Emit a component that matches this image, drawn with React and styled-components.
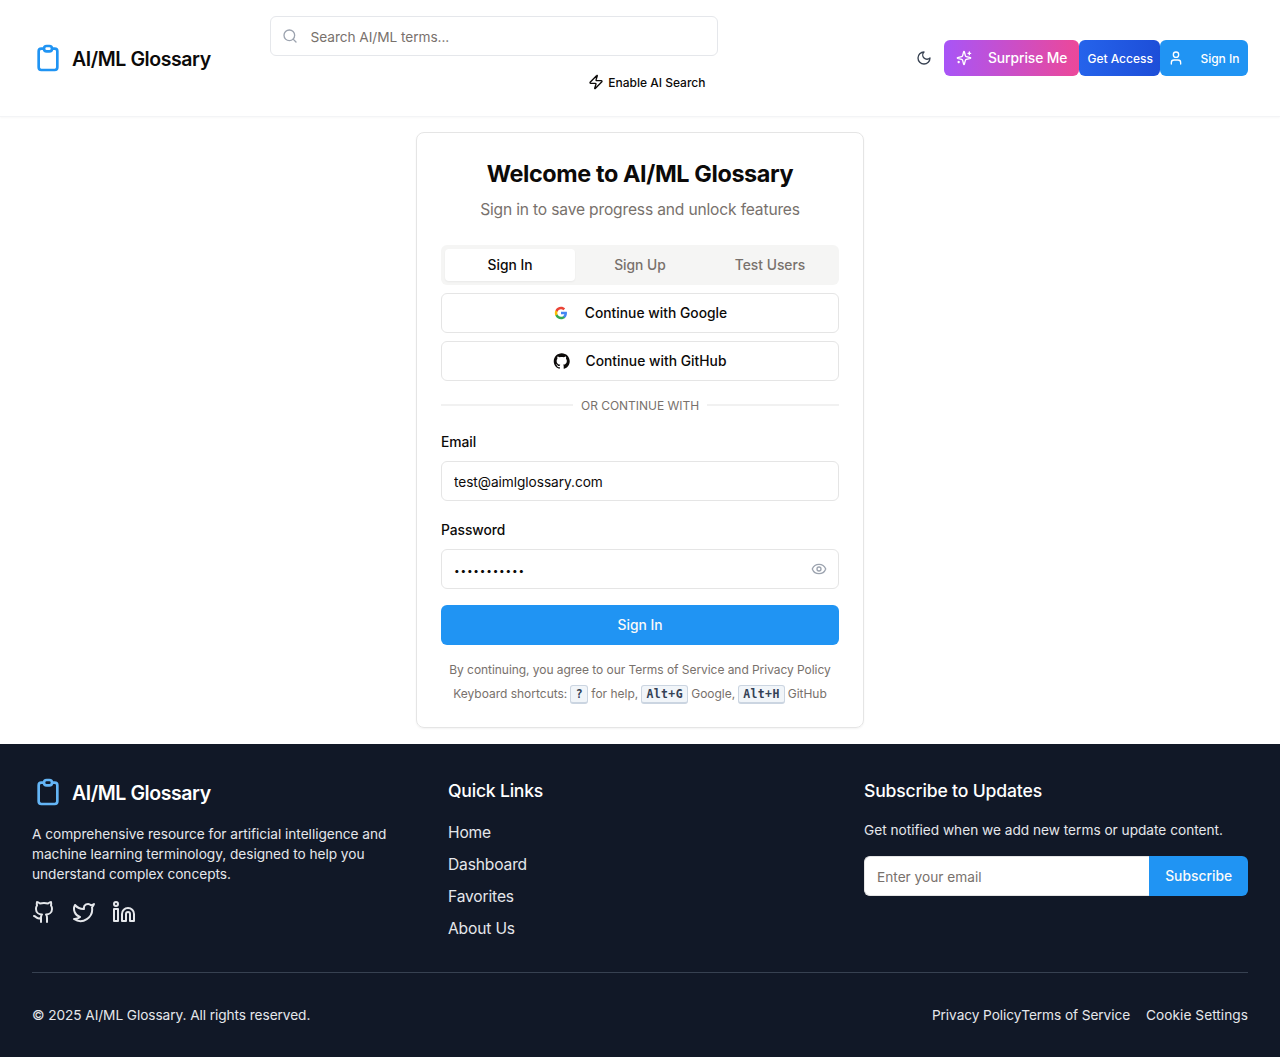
import React from "react";
import styled, { createGlobalStyle, css } from "styled-components";
import { Search, Zap, Eye, User, Github, Twitter, Linkedin } from "lucide-react";

const GlobalStyle = createGlobalStyle`
  *, *::before, *::after { box-sizing: border-box; }
  body {
    margin: 0;
    background: #fff;
    color: #0c0a09;
    font-family: Inter, "Liberation Sans", sans-serif;
    font-size: 16px;
    line-height: 24px;
    -webkit-font-smoothing: antialiased;
  }
  h1, h2, h3, p, ul { margin: 0; padding: 0; }
  ul { list-style: none; }
  a { color: inherit; text-decoration: none; }
  button, input { font: inherit; color: inherit; letter-spacing: inherit; }
`;

const Page = styled.div`
  display: flex;
  flex-direction: column;
  min-height: 1057px;
`;

/* Header */
const Header = styled.header`
  display: flex;
  align-items: center;
  height: 117px;
  padding: 16px 32px;
  border-bottom: 1px solid #f3f4f6;
  box-shadow: 0 1px 2px rgba(0, 0, 0, 0.03);
`;

const Brand = styled.a`
  display: flex;
  align-items: center;
  gap: 8px;
  color: ${(p) => p.$color || "inherit"};
  font-size: 19.5px;
  line-height: 28px;
  font-weight: 600;
  letter-spacing: -0.42px;
`;

const BrandName = styled.span`
  padding-top: 2px;
`;

const HeaderBrand = styled(Brand)`
  width: 237.5px;
`;

const SearchArea = styled.div`
  display: flex;
  flex-direction: column;
  align-items: flex-end;
  gap: 8px;
  width: 448px;
`;

const fieldBox = css`
  height: 40px;
  border: 1px solid #e5e5e5;
  border-radius: 6px;
  background: #fff;
  font-size: 13.7px;
  line-height: 20px;
  letter-spacing: -0.06px;
  outline: none;
  &::placeholder { color: #78716c; opacity: 1; }
`;

const SearchBox = styled.label`
  display: flex;
  align-items: center;
  gap: 13px;
  width: 100%;
  padding: 0 11px;
  ${fieldBox}
  border-color: #e5e7eb;
  svg { color: #9ca3af; flex: none; }
`;

const BareInput = styled.input`
  flex: 1;
  min-width: 0;
  border: 0;
  padding: 2px 0 0;
  background: transparent;
  outline: none;
  &::placeholder { color: #78716c; opacity: 1; }
  &[type="password"] { font-size: 10px; letter-spacing: 0.82px; }
`;

const AiToggle = styled.button`
  display: flex;
  align-items: center;
  gap: 4px;
  height: 36px;
  padding: 0 12px;
  border: 0;
  background: none;
  font-size: 12px;
  font-weight: 500;
  letter-spacing: 0;
`;

const ButtonText = styled.span`
  padding-top: 2px;
`;

const Actions = styled.div`
  display: flex;
  align-items: center;
  margin-left: auto;
`;

const IconButton = styled.button`
  display: flex;
  align-items: center;
  justify-content: center;
  width: 40px;
  height: 36px;
  padding: 0;
  border: 0;
  background: none;
  color: #374151;
`;

const HeaderButton = styled.button`
  display: flex;
  align-items: center;
  gap: 16px;
  width: ${(p) => p.$width};
  height: 36px;
  padding: 0 ${(p) => p.$pad};
  border: 0;
  border-radius: 6px;
  background: ${(p) => p.$bg};
  color: #fff;
  font-size: ${(p) => p.$size || "12px"};
  font-weight: 500;
  letter-spacing: ${(p) => p.$track || "0"};
  white-space: nowrap;
  svg { flex: none; }
`;

/* Sign-in card */
const Main = styled.main`
  display: flex;
  justify-content: center;
  padding: 15px 0 16px;
`;

const Card = styled.section`
  display: flex;
  flex-direction: column;
  width: 448px;
  height: 596px;
  padding: 24px;
  border: 1px solid #e5e5e5;
  border-radius: 8px;
  box-shadow: 0 1px 2px rgba(0, 0, 0, 0.05);
`;

const Title = styled.h1`
  padding-top: 1px;
  font-size: 23.4px;
  line-height: 32px;
  font-weight: 700;
  text-align: center;
  letter-spacing: -0.39px;
`;

const Subtitle = styled.p`
  margin-top: 8px;
  color: #78716c;
  font-size: 15.6px;
  text-align: center;
  letter-spacing: -0.17px;
`;

const Tabs = styled.div`
  display: grid;
  grid-template-columns: repeat(3, 1fr);
  height: 40px;
  margin-top: 23px;
  padding: 4px;
  border-radius: 6px;
  background: #f5f5f4;
`;

const Tab = styled.button`
  border: 0;
  border-radius: 4px;
  padding: 0;
  background: ${(p) => (p.$active ? "#fff" : "transparent")};
  box-shadow: ${(p) => (p.$active ? "0 1px 2px rgba(0, 0, 0, 0.05)" : "none")};
  color: ${(p) => (p.$active ? "#0c0a09" : "#78716c")};
  font-size: 13.8px;
  line-height: 20px;
  font-weight: 500;
  letter-spacing: 0.01px;
`;

const ProviderButton = styled.button`
  display: flex;
  align-items: center;
  justify-content: center;
  gap: 16px;
  height: 40px;
  margin-top: 8px;
  border: 1px solid #e5e5e5;
  border-radius: 6px;
  background: #fff;
  font-size: 13.8px;
  line-height: 20px;
  font-weight: 500;
  letter-spacing: 0.02px;
`;

const Divider = styled.div`
  display: flex;
  align-items: center;
  gap: 8px;
  height: 16px;
  margin-top: 16px;
  color: #78716c;
  font-size: 12px;
  line-height: 16px;
  letter-spacing: -0.03px;
  white-space: nowrap;
  &::before, &::after {
    content: "";
    flex: 1;
    height: 2px;
    background: #f1f1f1;
  }
`;

const DividerText = styled.span`
  padding-top: 2px;
`;

const Label = styled.label`
  margin-top: 19px;
  font-size: 13.8px;
  line-height: 20px;
  font-weight: 500;
  letter-spacing: -0.05px;
`;

const Field = styled.div`
  display: flex;
  align-items: center;
  margin-top: 9px;
  padding: 0 11px 0 12px;
  ${fieldBox}
  svg { color: #9ca3af; flex: none; }
`;

const Submit = styled.button`
  height: 40px;
  margin-top: 16px;
  border: 0;
  border-radius: 6px;
  background: #2094f3;
  color: #fafaf9;
  font-size: 13.8px;
  line-height: 20px;
  font-weight: 500;
  letter-spacing: 0.01px;
`;

const Note = styled.p`
  display: flex;
  align-items: center;
  justify-content: center;
  height: 16px;
  margin-top: ${(p) => p.$top};
  color: #78716c;
  font-size: 12px;
  line-height: 16px;
  letter-spacing: ${(p) => p.$track};
  white-space: pre;
`;

const Kbd = styled.kbd`
  display: flex;
  justify-content: center;
  width: ${(p) => p.$width};
  height: 19px;
  margin: 0 3px;
  border: 1px solid #cbd5e1;
  border-bottom-width: 2px;
  border-radius: 3px;
  background: #f1f5f9;
  color: #334155;
  font-family: "DejaVu Sans Mono", monospace;
  font-size: 11.5px;
  line-height: 17px;
  font-weight: 700;
  letter-spacing: 0.4px;
`;

/* Footer */
const Footer = styled.footer`
  flex: 1;
  padding: 32px;
  background: #111827;
  color: #e5e7eb;
`;

const FooterGrid = styled.div`
  display: grid;
  grid-template-columns: repeat(3, 384px);
  gap: 32px;
  height: 164px;
`;

const Blurb = styled.p`
  margin-top: 16px;
  font-size: 13.7px;
  line-height: 20px;
  letter-spacing: ${(p) => p.$track};
`;

const Social = styled.div`
  display: flex;
  gap: 16px;
  margin-top: 16px;
`;

const FooterHeading = styled.h3`
  height: 28px;
  padding-top: 1px;
  color: #fff;
  font-size: 17.6px;
  line-height: 28px;
  font-weight: 500;
  letter-spacing: ${(p) => p.$track};
`;

const LinkList = styled.ul`
  display: flex;
  flex-direction: column;
  gap: 8px;
  margin-top: 17px;
  font-size: 15.6px;
  letter-spacing: -0.16px;
`;

const SubscribeRow = styled.div`
  display: flex;
  margin-top: 16px;
`;

const EmailInput = styled.input`
  width: 285.3px;
  ${fieldBox}
  border-right: 0;
  border-radius: 6px 0 0 6px;
  padding: 1px 12px 0;
  letter-spacing: -0.01px;
`;

const SubscribeButton = styled.button`
  flex: 1;
  padding: 0;
  border: 0;
  border-radius: 0 6px 6px 0;
  background: #2094f3;
  color: #fafaf9;
  font-size: 13.8px;
  line-height: 20px;
  font-weight: 500;
  letter-spacing: 0.02px;
`;

const FooterBottom = styled.div`
  display: flex;
  justify-content: space-between;
  margin-top: 32px;
  padding-top: 32px;
  border-top: 1px solid #374151;
  font-size: 13.7px;
  line-height: 20px;
  letter-spacing: -0.08px;
`;

const LegalLinks = styled.div`
  display: flex;
  a { letter-spacing: -0.09px; }
  a:last-child { margin-left: 16px; letter-spacing: 0.03px; }
`;

const ClipboardLogo = ({ color }) => (
  <svg width="32" height="32" viewBox="0 0 24 24" fill="none" stroke={color} strokeWidth="2" strokeLinecap="round" strokeLinejoin="round">
    <path d="M9 5H7a2 2 0 00-2 2v12a2 2 0 002 2h10a2 2 0 002-2V7a2 2 0 00-2-2h-2M9 5a2 2 0 002 2h2a2 2 0 002-2M9 5a2 2 0 012-2h2a2 2 0 012 2" />
  </svg>
);

const Line = ({ children, size = 16 }) => (
  <svg width={size} height={size} viewBox="0 0 24 24" fill="none" stroke="currentColor" strokeWidth="2" strokeLinecap="round" strokeLinejoin="round">
    {children}
  </svg>
);

const MoonIcon = () => (
  <Line><path d="M12 3a6 6 0 0 0 9 9 9 9 0 1 1-9-9Z" /></Line>
);

const SparklesIcon = () => (
  <Line>
    <path d="M9.937 15.5A2 2 0 0 0 8.5 14.063l-6.135-1.582a.5.5 0 0 1 0-.962L8.5 9.936A2 2 0 0 0 9.937 8.5l1.582-6.135a.5.5 0 0 1 .963 0L14.063 8.5A2 2 0 0 0 15.5 9.937l6.135 1.581a.5.5 0 0 1 0 .964L15.5 14.063a2 2 0 0 0-1.437 1.437l-1.582 6.135a.5.5 0 0 1-.963 0z" />
    <path d="M20 3v4M22 5h-4M4 17v2M5 18H3" />
  </Line>
);

const GoogleIcon = () => (
  <svg width="16" height="16" viewBox="-2.2 -2.2 28.4 28.4">
    <path fill="#4285F4" d="M22.56 12.25c0-.78-.07-1.53-.2-2.25H12v4.26h5.92c-.26 1.37-1.04 2.53-2.21 3.31v2.77h3.57c2.08-1.92 3.28-4.74 3.28-8.09z" />
    <path fill="#34A853" d="M12 23c2.97 0 5.46-.98 7.28-2.66l-3.57-2.77c-.98.66-2.23 1.06-3.71 1.06-2.86 0-5.29-1.93-6.16-4.53H2.18v2.84C3.99 20.53 7.7 23 12 23z" />
    <path fill="#FBBC05" d="M5.84 14.09c-.22-.66-.35-1.36-.35-2.09s.13-1.43.35-2.09V7.07H2.18C1.43 8.55 1 10.22 1 12s.43 3.45 1.18 4.93l3.66-2.84z" />
    <path fill="#EA4335" d="M12 5.38c1.62 0 3.06.56 4.21 1.64l3.15-3.15C17.45 2.09 14.97 1 12 1 7.7 1 3.99 3.47 2.18 7.07l3.66 2.84c.87-2.6 3.3-4.53 6.16-4.53z" />
  </svg>
);

const GithubMark = () => (
  <svg width="16" height="16" viewBox="0.4 0 24 24" fill="currentColor" overflow="visible">
    <path d="M12 .297c-6.63 0-12 5.373-12 12 0 5.303 3.438 9.8 8.205 11.385.6.113.82-.258.82-.577 0-.285-.01-1.04-.015-2.04-3.338.724-4.042-1.61-4.042-1.61C4.422 18.07 3.633 17.7 3.633 17.7c-1.087-.744.084-.729.084-.729 1.205.084 1.838 1.236 1.838 1.236 1.07 1.835 2.809 1.305 3.495.998.108-.776.417-1.305.76-1.605-2.665-.3-5.466-1.332-5.466-5.93 0-1.31.465-2.38 1.235-3.22-.135-.303-.54-1.523.105-3.176 0 0 1.005-.322 3.3 1.23.96-.267 1.98-.399 3-.405 1.02.006 2.04.138 3 .405 2.28-1.552 3.285-1.23 3.285-1.23.645 1.653.24 2.873.12 3.176.765.84 1.23 1.91 1.23 3.22 0 4.61-2.805 5.625-5.475 5.92.42.36.81 1.096.81 2.22 0 1.606-.015 2.896-.015 3.286 0 .315.21.69.825.57C20.565 22.092 24 17.592 24 12.297c0-6.627-5.373-12-12-12" />
  </svg>
);

const quickLinks = ["Home", "Dashboard", "Favorites", "About Us"];

export default function App() {
  return (
    <Page>
      <GlobalStyle />
      <Header>
        <HeaderBrand href="#"><ClipboardLogo color="#2094f3" /><BrandName>AI/ML Glossary</BrandName></HeaderBrand>
        <SearchArea>
          <SearchBox>
            <Search size={16} />
            <BareInput placeholder="Search AI/ML terms..." />
          </SearchBox>
          <AiToggle><Zap size={16} /><ButtonText>Enable AI Search</ButtonText></AiToggle>
        </SearchArea>
        <Actions>
          <IconButton aria-label="Toggle theme"><MoonIcon /></IconButton>
          <HeaderButton $width="135.4px" $pad="12px" $size="13.8px" $track="-0.07px" $bg="linear-gradient(to right, #a855f7, #ec4899)"><SparklesIcon />Surprise Me</HeaderButton>
          <HeaderButton $width="81px" $pad="8px" $bg="linear-gradient(to right, #2563eb, #1d4ed8)"><ButtonText>Get Access</ButtonText></HeaderButton>
          <HeaderButton $width="87.6px" $pad="8px" $bg="#2094f3"><User size={16} /><ButtonText>Sign In</ButtonText></HeaderButton>
        </Actions>
      </Header>

      <Main>
        <Card>
          <Title>Welcome to AI/ML Glossary</Title>
          <Subtitle>Sign in to save progress and unlock features</Subtitle>
          <Tabs>
            <Tab $active>Sign In</Tab>
            <Tab>Sign Up</Tab>
            <Tab>Test Users</Tab>
          </Tabs>
          <ProviderButton><GoogleIcon />Continue with Google</ProviderButton>
          <ProviderButton><GithubMark />Continue with GitHub</ProviderButton>
          <Divider><DividerText>OR CONTINUE WITH</DividerText></Divider>
          <Label>Email</Label>
          <Field><BareInput defaultValue="test@aimlglossary.com" /></Field>
          <Label>Password</Label>
          <Field>
            <BareInput type="password" defaultValue="password123" />
            <Eye size={16} />
          </Field>
          <Submit>Sign In</Submit>
          <Note $top="17px" $track="-0.05px">By continuing, you agree to our Terms of Service and Privacy Policy</Note>
          <Note $top="8px" $track="-0.01px">
            Keyboard shortcuts:<Kbd $width="18px">?</Kbd>for help,<Kbd $width="47px">Alt+G</Kbd>Google,<Kbd $width="46.5px">Alt+H</Kbd>GitHub
          </Note>
        </Card>
      </Main>

      <Footer>
        <FooterGrid>
          <div>
            <Brand as="div" $color="#fff"><ClipboardLogo color="#64b5f6" /><BrandName>AI/ML Glossary</BrandName></Brand>
            <Blurb $track="-0.04px">
              A comprehensive resource for artificial intelligence and<br />
              machine learning terminology, designed to help you<br />
              understand complex concepts.
            </Blurb>
            <Social>
              <Github size={24} />
              <Twitter size={24} />
              <Linkedin size={24} />
            </Social>
          </div>
          <div>
            <FooterHeading $track="-0.22px">Quick Links</FooterHeading>
            <LinkList>
              {quickLinks.map((name) => <li key={name}><a href="#">{name}</a></li>)}
            </LinkList>
          </div>
          <div>
            <FooterHeading $track="-0.17px">Subscribe to Updates</FooterHeading>
            <Blurb $track="-0.02px">Get notified when we add new terms or update content.</Blurb>
            <SubscribeRow>
              <EmailInput placeholder="Enter your email" />
              <SubscribeButton>Subscribe</SubscribeButton>
            </SubscribeRow>
          </div>
        </FooterGrid>
        <FooterBottom>
          <span>© 2025 AI/ML Glossary. All rights reserved.</span>
          <LegalLinks>
            <a href="#">Privacy Policy</a><a href="#">Terms of Service</a><a href="#">Cookie Settings</a>
          </LegalLinks>
        </FooterBottom>
      </Footer>
    </Page>
  );
}
